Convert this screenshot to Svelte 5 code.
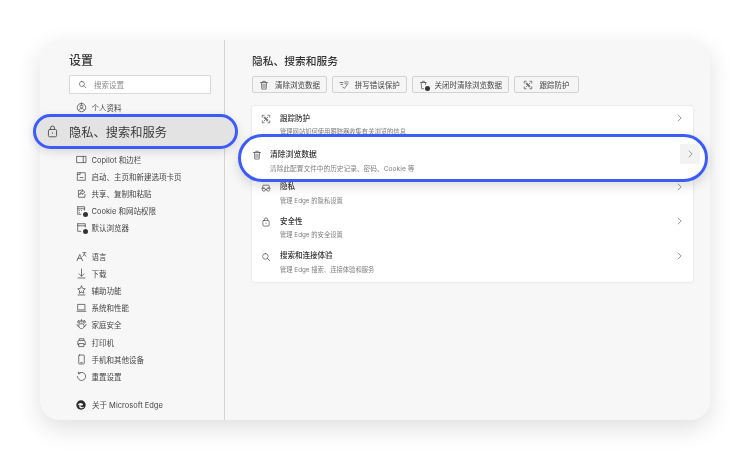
<script>
  const I = {
    profile: 'M8 1.800a6.200 6.200 0 1 0 0 12.400A6.200 6.200 0 0 0 8 1.800ZM8 4.200a2.200 2.200 0 1 1 0 4.400 2.200 2.200 0 0 1 0-4.400ZM3.800 12.300c.6-2 2-2.800 4.200-2.800s3.600.8 4.200 2.800',
    sidebar: 'M1.500 3.500h13v9h-13zM10.500 3.500v9',
    start: 'M2.500 2.500h11v11h-11zM2.500 5h3.500V2.500M6 9.500h4',
    share: 'M7 3.500H3.500v10h9.500V9.500M9 2.500l4 3.500-4 3.500V7.500c-2 0-3 .8-3.500 2.500 0-3 1.300-4.800 3.500-5Z',
    cookie: 'M2.500 2.500h10v5M2.500 2.500v11H7M2.500 5.500h10M5 8h.1M5 11h.1M8 8h.1',
    browser: 'M2.500 2.500h11v5M2.500 2.500v11h4.500M2.500 5.500h11',
    lang: 'M1.500 14 5.500 5l4 9M3 10.800h5M10 2.500h4.500M12.200 2.500c0 2.500-.7 4-2.200 5M12 5c.5 1 1.200 1.800 2.500 2.500',
    down: 'M8 1.500v10M4.500 8.500 8 12l3.500-3.500M3 14.500h10',
    access: 'M8 1.500l1.700 3.500 3.800.5-2.800 2.600.7 3.900L8 10.200M8 1.500 6.300 5l-3.800.5 2.800 2.600-.7 3.900L8 10.200M3 14.500h10',
    laptop: 'M3 3.500h10v8H3zM1.500 13.500h13',
    family: 'M4 2.500a1.700 1.700 0 1 1 0 3.400 1.700 1.700 0 0 1 0-3.400ZM12 2.500a1.700 1.700 0 1 1 0 3.400 1.700 1.700 0 0 1 0-3.400ZM8 1.500a1.300 1.300 0 1 1 0 2.600 1.300 1.300 0 0 1 0-2.600ZM1.500 8c0 2 1 3 2.500 3.200M14.500 8c0 2-1 3-2.500 3.200M5.500 7h5l1.500 3c0 2.200-1.800 4-4 4s-4-1.800-4-4Z',
    printer: 'M4.500 5V2.500h7V5M4 11H2.500V7.500a2.500 2.500 0 0 1 2.500-2.500h6a2.500 2.500 0 0 1 2.500 2.500V11H12M4.500 9.500h7v4.500h-7z',
    phone: 'M5 1.500h6a1 1 0 0 1 1 1v11a1 1 0 0 1-1 1H5a1 1 0 0 1-1-1v-11a1 1 0 0 1 1-1ZM7 12.500h2',
    reset: 'M3.800 3.500A6 6 0 1 1 2 8M3.500 1.500v2.300h2.300',
    lock: 'M4.500 5.500h7a1.500 1.500 0 0 1 1.500 1.500v6a1.500 1.500 0 0 1-1.500 1.500h-7A1.500 1.500 0 0 1 3 13V7a1.500 1.500 0 0 1 1.500-1.500ZM5.500 5.500V3.800a2.500 2.500 0 0 1 5 0v1.700M8 9.700v.6',
    search: 'M7 2.500a4.500 4.500 0 1 1 0 9 4.500 4.500 0 0 1 0-9ZM10.300 10.300l3.700 3.700',
    trash: 'M2.500 4h11M6 4V2h4v2M3.800 4l.7 10.500h7L12.200 4M6.500 6.500v5.500M9.500 6.500v5.500',
    spell: 'M1.500 4h5M3 7h3M6 11l2.500 2.500 6-8M9 3h5.500M9.500 6h2.500',
    closeTrash: 'M2.500 4h9M5.500 4V2h3v2M3.500 4l.7 10h3.300M10.500 4v3.500',
    track: 'M2 5V2h3M11 2h3v3M14 11v3h-3M5 14H2v-3M5 5l6 6M11 5l-6 6M6.500 4.500a1.500 1.500 0 1 1-2 2M9.500 11.500a1.500 1.500 0 1 1 2-2',
    privacy: 'M1.500 9l2-5.500h9l2 5.500M4.500 8a2.500 2.500 0 1 1 0 5 2.500 2.500 0 0 1 0-5ZM11.500 8a2.500 2.500 0 1 1 0 5 2.500 2.500 0 0 1 0-5ZM7 10.500h2'
  };
  const top = [{ i: 'profile', t: '个人资料' }];
  const rest = [
    { i: 'sidebar', t: 'Copilot 和边栏' },
    { i: 'start', t: '启动、主页和新建选项卡页' },
    { i: 'share', t: '共享、复制和粘贴' },
    { i: 'cookie', t: 'Cookie 和网站权限', badge: true },
    { i: 'browser', t: '默认浏览器', badge: true }
  ];
  const second = [
    { i: 'lang', t: '语言' },
    { i: 'down', t: '下载' },
    { i: 'access', t: '辅助功能' },
    { i: 'laptop', t: '系统和性能' },
    { i: 'family', t: '家庭安全' },
    { i: 'printer', t: '打印机' },
    { i: 'phone', t: '手机和其他设备' },
    { i: 'reset', t: '重置设置' }
  ];
  const actions = [
    { i: 'trash', t: '清除浏览数据' },
    { i: 'spell', t: '拼写错误保护' },
    { i: 'closeTrash', t: '关闭时清除浏览数据', badge: true },
    { i: 'track', t: '跟踪防护' }
  ];
  const cards = [
    { i: 'track', t: '跟踪防护', s: '管理网站如何使用跟踪器收集有关浏览的信息' },
    { spacer: true },
    { i: 'privacy', t: '隐私', s: '管理 Edge 的隐私设置' },
    { i: 'lock', t: '安全性', s: '管理 Edge 的安全设置' },
    { i: 'search', t: '搜索和连接体验', s: '管理 Edge 搜索、连接体验和服务' }
  ];
</script>

{#snippet icon(name, size, badge)}
  <span class="ic" style="width:{size}px;height:{size}px">
    <svg viewBox="0 0 16 16" width={size} height={size}><path d={I[name]} /></svg>
    {#if badge}<i class="badge"></i>{/if}
  </span>
{/snippet}

{#snippet navRow(r)}
  <li class="nav-row">{@render icon(r.i, 11, r.badge)}<span>{r.t}</span></li>
{/snippet}

<div class="window">
  <aside class="side">
    <h1>设置</h1>
    <div class="search">{@render icon('search', 9)}<span>搜索设置</span></div>
    <ul class="nav">
      {#each top as r}{@render navRow(r)}{/each}
      <li class="nav-gap"></li>
      {#each rest as r}{@render navRow(r)}{/each}
    </ul>
    <ul class="nav second">
      {#each second as r}{@render navRow(r)}{/each}
    </ul>
    <div class="about">
      <svg class="edge" viewBox="0 0 16 16" width="10" height="10">
        <circle cx="8" cy="8" r="7.500" fill="#2b2b2b" />
        <path d="M3 8.500C4 5 8 4 10.500 6c1 1 .8 2.500-.5 2.800H7c-.2 2 2.500 3.500 6 2-1 2-4 3.200-6 2.200C5 12 4.500 9.500 6 7.500 4.800 7.500 3.800 8 3 8.500Z" />
      </svg>
      <span>关于 Microsoft Edge</span>
    </div>
  </aside>

  <main class="main">
    <h2>隐私、搜索和服务</h2>
    <div class="actions">
      {#each actions as a}
        <div class="act">{@render icon(a.i, 10, a.badge)}<span>{a.t}</span></div>
      {/each}
    </div>
    <div class="card">
      {#each cards as c}
        {#if c.spacer}
          <div class="row"></div>
        {:else}
          <div class="row">
            <span class="row-ic">{@render icon(c.i, 10)}</span>
            <div class="txt"><b>{c.t}</b><small>{c.s}</small></div>
            <svg class="chev" viewBox="0 0 8 10" width="6" height="8"><path d="M1.500 1l4 4-4 4" /></svg>
          </div>
        {/if}
      {/each}
    </div>
  </main>

  <div class="pill-left">
    {@render icon('lock', 13)}
    <span>隐私、搜索和服务</span>
  </div>

  <div class="pill-right">
    <span class="row-ic">{@render icon('trash', 10)}</span>
    <div class="txt"><b>清除浏览数据</b><small>清除此配置文件中的历史记录、密码、Cookie 等</small></div>
    <div class="chev-box"><svg class="chev" viewBox="0 0 8 10" width="6" height="8"><path d="M1.500 1l4 4-4 4" /></svg></div>
  </div>
</div>

<style>
  :global(body) { margin: 0; background: #fff; }
  * { box-sizing: border-box; }
  .window {
    position: relative;
    display: flex;
    width: 670px;
    height: 380px;
    margin: 40px;
    border-radius: 20px;
    background: #f7f7f7;
    box-shadow: 0 8px 24px rgba(0, 0, 0, 0.13);
    font-family: Inter, "Noto Sans CJK SC", sans-serif;
    color: #3a3a3a;
    filter: blur(0.3px);
  }
  .ic { position: relative; display: inline-flex; flex: none; }
  svg path { fill: none; stroke: #4a4a4a; stroke-width: 1.100; stroke-linejoin: round; stroke-linecap: round; }
  .edge path { stroke: none; fill: #f7f7f7; }
  .badge {
    position: absolute; right: -1px; bottom: -1px;
    width: 5px; height: 5px; border-radius: 50%; background: #333;
  }
  .side {
    flex: none;
    width: 185px;
    padding: 13px 13px 0 29px;
    border-right: 1px solid #d4d4d4;
    display: flex;
    flex-direction: column;
  }
  h1 { margin: 0; font-size: 12px; line-height: 16px; font-weight: 500; color: #333; }
  .search {
    display: flex; align-items: center; gap: 7px;
    height: 19px; margin-top: 6px; padding-left: 8px;
    background: #fff; border: 1px solid #d9d9d9;
    font-size: 7.500px; color: #8a8a8a;
  }
  ul { list-style: none; margin: 0; padding: 0; }
  .nav { margin-top: 5px; margin-left: 6.500px; }
  .nav.second { margin-top: 11px; }
  .nav-row { display: flex; align-items: center; gap: 5px; height: 17.200px; font-size: 7.500px; color: #444; }
  .nav-gap { height: 34.400px; }
  .about { display: flex; align-items: center; gap: 6px; margin: 11px 0 0 7px; height: 17.200px; font-size: 7.500px; color: #444; }
  .main { flex: 1; padding: 14px 17px 0 27px; }
  h2 { margin: 0; font-size: 10.750px; line-height: 15px; font-weight: 500; color: #333; }
  .actions { display: flex; gap: 4.800px; margin-top: 7px; }
  .act {
    display: flex; align-items: center; gap: 6px;
    height: 17px; padding: 0 6px;
    background: #f5f5f5; border: 1px solid #d2d2d2; border-radius: 2px;
    font-size: 7.500px; color: #444;
  }
  .act:last-child { padding: 0 8.500px; }
  .card {
    margin-top: 13px; padding: 2px 0;
    background: #fff; border-radius: 2px;
    box-shadow: 0 0 2px rgba(0, 0, 0, 0.16);
  }
  .row { display: flex; align-items: flex-start; gap: 9px; height: 34.400px; padding: 4.500px 10px 0 9px; }
  .row-ic { display: flex; padding-top: 1.500px; }
  .chev { margin-top: 1.500px; }
  .txt { flex: 1; display: flex; flex-direction: column; gap: 3.500px; min-width: 0; }
  .txt b { font-size: 7.500px; line-height: 11px; font-weight: 500; color: #333; }
  .txt small { font-size: 6.300px; line-height: 10px; color: #808080; }
  .chev path { stroke: #777; stroke-width: 1; }
  .pill-left {
    position: absolute; left: -7px; top: 74px;
    display: flex; align-items: center; gap: 10px;
    width: 205px; height: 35px; padding-left: 10px;
    background: #e3e3e3; border: 3px solid #3b5bfb; border-radius: 18px;
    font-size: 12.250px; color: #3a3a3a;
    box-shadow: 0 3px 10px rgba(0, 0, 0, 0.12);
  }
  .pill-right {
    position: absolute; left: 198px; top: 94px;
    display: flex; align-items: flex-start; gap: 8px;
    width: 470px; height: 48px; padding: 7px 5px 0 11px;
    background: #fff; border: 3px solid #3b5bfb; border-radius: 24px;
    box-shadow: 0 4px 12px rgba(0, 0, 0, 0.14);
  }
  .pill-right .row-ic { padding-top: 6px; }
  .pill-right .txt { gap: 4.200px; padding-top: 4.500px; }
  .pill-right .txt b { font-size: 7.800px; }
  .pill-right .txt small { font-size: 6.700px; }
  .chev-box {
    width: 20px; height: 20px; padding-left: 2px; background: #f2f2f2;
    display: flex; align-items: center; justify-content: center;
  }
  .chev-box .chev { margin-top: 0; }
</style>
